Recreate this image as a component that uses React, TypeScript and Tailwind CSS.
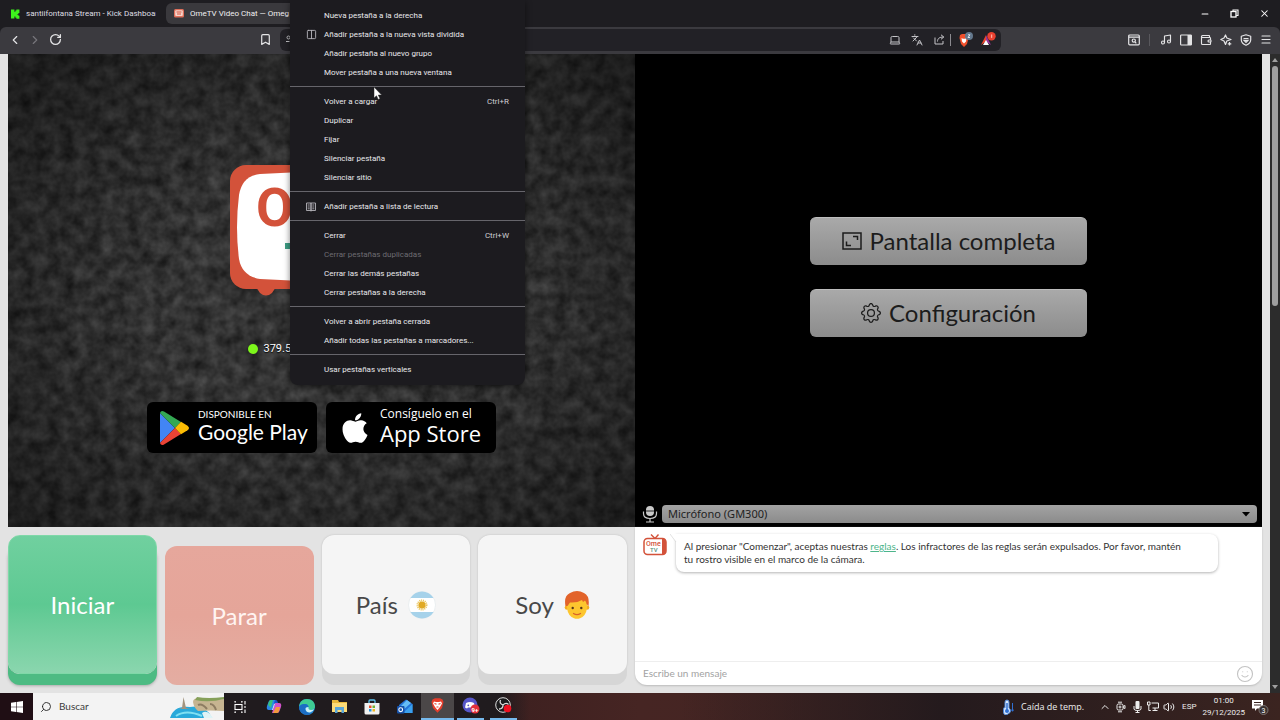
import type { ReactNode } from "react";
import {
  Bookmark,
  ChevronLeft,
  ChevronRight,
  ChevronUp,
  Columns2,
  Languages,
  Laptop,
  Menu,
  Minus,
  Music,
  RotateCw,
  Search,
  Smile,
  Volume2,
  Wallet,
  X,
} from "lucide-react";
import { BsGear } from "react-icons/bs";
import { FaApple } from "react-icons/fa";

interface MenuEntry {
  label: string;
  shortcut?: string;
  icon?: ReactNode;
  disabled?: boolean;
}

const readingListIcon = (
  <svg width="10" height="10" viewBox="0 0 10 10" fill="none" stroke="currentColor" strokeWidth=".9" aria-hidden="true">
    <path d="M.5 1H5v7.500H.5zM5 1h4.500v7.500H5zM5 8.500v1M1.700 3h2M1.700 5h2M1.700 6.800h2M6.300 3h2M6.300 5h2M6.300 6.800h2" />
  </svg>
);

const menuGroups: MenuEntry[][] = [
  [
    { label: "Nueva pestaña a la derecha" },
    { label: "Añadir pestaña a la nueva vista dividida", icon: <Columns2 size={11} strokeWidth={2} /> },
    { label: "Añadir pestaña al nuevo grupo" },
    { label: "Mover pestaña a una nueva ventana" },
  ],
  [
    { label: "Volver a cargar", shortcut: "Ctrl+R" },
    { label: "Duplicar" },
    { label: "Fijar" },
    { label: "Silenciar pestaña" },
    { label: "Silenciar sitio" },
  ],
  [{ label: "Añadir pestaña a lista de lectura", icon: readingListIcon }],
  [
    { label: "Cerrar", shortcut: "Ctrl+W" },
    { label: "Cerrar pestañas duplicadas", disabled: true },
    { label: "Cerrar las demás pestañas" },
    { label: "Cerrar pestañas a la derecha" },
  ],
  [{ label: "Volver a abrir pestaña cerrada" }, { label: "Añadir todas las pestañas a marcadores..." }],
  [{ label: "Usar pestañas verticales" }],
];

function IconButton({ label, className = "", children }: { label: string; className?: string; children: ReactNode }) {
  return (
    <button type="button" aria-label={label} className={`flex shrink-0 items-center justify-center ${className}`}>
      {children}
    </button>
  );
}

function TabStrip() {
  return (
    <div className="flex h-[27px] items-center bg-[#1e1d21] font-[Roboto,sans-serif] text-[8px] text-[#dedde2]">
      <button type="button" className="flex h-[21px] w-[166px] items-center gap-[6px] pl-[10px]">
        <svg width="10" height="10" viewBox="0 0 10 10" fill="#3df21c" aria-hidden="true">
          <path d="M1 .5h3.400v2.200h1V1.600h1V.5h3V4h-1v1h-1v.8h1v1h1v3H6.400v-1h-1V7.500h-1v2H1z" />
        </svg>
        <span className="w-[130px] overflow-hidden whitespace-nowrap text-left">santiifontana Stream - Kick Dashboard</span>
      </button>
      <button type="button" className="flex h-[21px] w-[170px] items-center gap-[6px] rounded-md bg-[#3a393d] pl-2">
        <svg width="10" height="9" viewBox="0 0 10 9" aria-hidden="true">
          <rect width="10" height="8.500" rx="1.500" fill="#e0705b" />
          <rect x="1.200" y="1.300" width="7.600" height="5.600" rx="1" fill="#f6d5cc" />
          <path d="M2.500 3h5M3 5h4" stroke="#d6533a" strokeWidth="1.100" />
        </svg>
        <span className="whitespace-nowrap text-left text-[#f0f0f2]">OmeTV Video Chat — Omeg</span>
      </button>
      <div className="ml-auto flex items-center gap-[20px] pr-[10px] text-white">
        <IconButton label="Minimizar">
          <Minus size={10} strokeWidth={2.500} />
        </IconButton>
        <IconButton label="Restaurar">
          <svg width="9" height="9" viewBox="0 0 9 9" fill="none" stroke="currentColor" aria-hidden="true">
            <rect x="1" y="2.500" width="5" height="5.500" strokeWidth="1.300" />
            <path d="M3 2.500V1h5v5.500H6.200" strokeWidth="1.100" />
          </svg>
        </IconButton>
        <IconButton label="Cerrar ventana">
          <X size={11} strokeWidth={2.200} />
        </IconButton>
      </div>
    </div>
  );
}

function Toolbar() {
  return (
    <div className="flex h-[27px] items-center rounded-t-md bg-[#3b3a3f] px-2 pb-0.5 text-[#e4e4e6]">
      <IconButton label="Atrás" className="w-[14px]">
        <ChevronLeft size={16} />
      </IconButton>
      <IconButton label="Adelante" className="ml-[6px] w-[14px] text-[#77767b]">
        <ChevronRight size={16} />
      </IconButton>
      <IconButton label="Recargar" className="ml-[6px] w-[14px]">
        <RotateCw size={13} strokeWidth={2.400} />
      </IconButton>
      <IconButton label="Marcador" className="ml-[196px] w-[14px]">
        <Bookmark size={13} strokeWidth={2.200} />
      </IconButton>
      <div className="ml-2 flex h-[22px] flex-1 items-center rounded-md bg-[#222126] pr-[5px] text-[#c4c4c8]">
        <svg className="ml-[6px]" width="9" height="9" viewBox="0 0 9 9" fill="none" stroke="currentColor" aria-hidden="true">
          <circle cx="2.500" cy="2.500" r="1.500" />
          <circle cx="6" cy="6.500" r="1.500" />
          <path d="M5 2.500h4M0 6.500h3.500" />
        </svg>
        <IconButton label="Instalar" className="ml-auto w-3">
          <Laptop size={12} />
        </IconButton>
        <IconButton label="Traducir" className="ml-[10px] w-3">
          <Languages size={12} />
        </IconButton>
        <IconButton label="Compartir" className="ml-[10px] w-3">
          <svg width="11" height="11" viewBox="0 0 11 11" fill="none" stroke="currentColor" aria-hidden="true">
            <path d="M1 3.500v6.500h8V7M3.500 7.500c0-3 2-4.500 6-4.500M7 .800l2.800 2.200L7 5.300" />
          </svg>
        </IconButton>
        <span className="ml-[5px] h-3 w-px bg-[#8b8a90]" />
        <IconButton label="Brave Shields" className="ml-[6px] w-4">
          <svg width="16" height="16" viewBox="0 0 16 16" aria-hidden="true">
            <path d="M3 3l2-1h4l2 1 .5 3-1.500 6-3 3-3-3L2.500 6z" fill="#f0502c" />
            <path d="M4.500 6l1.500.8h2L9.500 6 9 9.500l-2 2-2-2z" fill="#fff" />
            <circle cx="12" cy="4" r="4" fill="#63788d" />
            <path d="M11 2.800h2L11 5.500h2" stroke="#e5edf5" strokeWidth=".9" fill="none" />
          </svg>
        </IconButton>
        <IconButton label="Brave Rewards" className="ml-[7px] w-4">
          <svg width="16" height="16" viewBox="0 0 16 16" aria-hidden="true">
            <path d="M6 3L1 13l5-3.500z" fill="#e8452c" />
            <path d="M6 3l5 10-5-3.500z" fill="#9a329a" />
            <path d="M6 8l3 5H3z" fill="#fff" />
            <circle cx="11.500" cy="4.200" r="4.200" fill="#e8402f" />
            <path d="M11.700 2.500v3.400" stroke="#ffc3b8" />
          </svg>
        </IconButton>
      </div>
      <div className="ml-[127px] flex shrink-0 items-center">
        <IconButton label="Buscar pestañas" className="w-3">
          <svg width="12" height="12" viewBox="0 0 12 12" fill="none" stroke="currentColor" strokeWidth="1.200" aria-hidden="true">
            <rect x=".7" y="1" width="10.600" height="9.800" rx="1" />
            <path d="M.7 3.200h10.600M7 8l1.300 1.300" />
            <circle cx="5.800" cy="6.600" r="1.600" />
          </svg>
        </IconButton>
        <span className="ml-[9px] h-3 w-px bg-[#59585d]" />
        <div className="ml-[10px] flex items-center gap-2">
          <IconButton label="Música" className="w-3">
            <Music size={13} strokeWidth={2.300} />
          </IconButton>
          <IconButton label="Barra lateral" className="w-3">
            <svg width="12" height="12" viewBox="0 0 12 12" aria-hidden="true">
              <rect x=".6" y="1" width="10.800" height="10" rx=".8" fill="none" stroke="currentColor" strokeWidth="1.200" />
              <path d="M7.500 1h4v10h-4z" fill="currentColor" />
            </svg>
          </IconButton>
          <IconButton label="Cartera" className="w-3">
            <Wallet size={14} strokeWidth={2.300} />
          </IconButton>
          <IconButton label="Leo" className="w-3">
            <svg width="12" height="12" viewBox="0 0 12 12" fill="none" stroke="currentColor" strokeWidth="1.200" aria-hidden="true">
              <path d="M5.500 1l1.300 3L11 5.500 6.800 7l-1.300 3.500L4 7 .8 5.500 4 4zM9.500 8v3.500M7.800 9.800h3.500" strokeLinejoin="round" />
            </svg>
          </IconButton>
          <IconButton label="VPN" className="w-3">
            <svg width="12" height="12" viewBox="0 0 12 12" fill="none" stroke="currentColor" strokeWidth="1.200" aria-hidden="true">
              <path d="M6 .8l4.700 1.500V6Q10.500 9.500 6 11.300 1.500 9.500 1.300 6V2.300z" strokeLinejoin="round" />
              <path d="M3.500 4.500h5M4 6.300l2 2 2-2z" />
            </svg>
          </IconButton>
          <IconButton label="Menú" className="w-3">
            <Menu size={15} strokeWidth={2.300} />
          </IconButton>
        </div>
      </div>
    </div>
  );
}

function TabMenu() {
  return (
    <div
      role="menu"
      className="absolute left-[290px] top-0 z-20 w-[235px] rounded-b-lg bg-[#1c1b1f] py-1.5 font-[Roboto,sans-serif] text-[8px] text-[#e9e9ec] shadow-[0_2px_6px_rgba(0,0,0,0.5)]"
    >
      {menuGroups.map((group, i) => (
        <div key={i} className={i > 0 ? "mt-1 border-t border-[#66656b] pt-[5px]" : ""}>
          {group.map((entry) => (
            <button
              key={entry.label}
              type="button"
              role="menuitem"
              disabled={entry.disabled}
              className="flex h-[19px] w-full items-center pl-4 pr-4 text-left disabled:text-[#6d6c72]"
            >
              <span className="w-[18px] shrink-0 text-[#b5b4ba]">{entry.icon}</span>
              <span className="whitespace-nowrap">{entry.label}</span>
              {entry.shortcut && <span className="ml-auto text-[#cfced3]">{entry.shortcut}</span>}
            </button>
          ))}
        </div>
      ))}
    </div>
  );
}

function Pointer() {
  return (
    <svg className="absolute left-[373px] top-[86px] z-30" width="10" height="15" viewBox="0 0 10 15" aria-hidden="true">
      <path d="M1 1v11l2.500-2.200 1.700 3.700 1.800-.8-1.700-3.600H8.700z" fill="#fff" stroke="#222" strokeWidth=".5" />
    </svg>
  );
}

function Static() {
  return (
    <svg className="absolute inset-0 h-full w-full" aria-hidden="true">
      <defs>
        <filter id="static" x="0" y="0" width="100%" height="100%" colorInterpolationFilters="sRGB">
          <feTurbulence type="fractalNoise" baseFrequency="0.075" numOctaves="3" seed="8" />
          <feColorMatrix values="0.26 0 0 0 0.07  0.26 0 0 0 0.07  0.26 0 0 0 0.07  0 0 0 0 1" />
        </filter>
        <radialGradient id="vignette" cx="50%" cy="52%" r="70%">
          <stop offset="0.350" stopColor="#000" stopOpacity="0" />
          <stop offset="1" stopColor="#000" stopOpacity="0.450" />
        </radialGradient>
      </defs>
      <rect width="100%" height="100%" filter="url(#static)" />
      <rect width="100%" height="100%" fill="url(#vignette)" />
    </svg>
  );
}

function RemoteVideo() {
  return (
    <section className="relative overflow-hidden bg-[#2b2b2b]">
      <Static />
      <div className="relative flex flex-col items-center pt-[111px]">
        <svg width="184" height="132" viewBox="0 0 184 132" aria-hidden="true">
          <rect width="184" height="124" rx="16" fill="#d3523a" />
          <path d="M26 122l4 6q6 5 12 0l4-6z" fill="#d3523a" />
          <path d="M30 9Q92 5 154 9q19 2 21 21 3 32 0 64-3 18-21 20-62 4-124 0-18-3-21-20-4-32 0-64 3-19 21-21z" fill="#fff" />
          <text x="26" y="61" fill="#d3523a" className="font-[Roboto,sans-serif] text-[54px] font-bold">
            O
          </text>
          <rect x="55" y="78" width="30" height="6" fill="#3d9d84" />
        </svg>
        <div className="mt-11 flex h-4 w-[148px] items-center gap-[6px] font-[Roboto,sans-serif] text-[11px] text-white [text-shadow:0_1px_1px_#000]">
          <span className="size-[10px] rounded-full bg-[#7df61b]" />
          <span>379.5</span>
        </div>
        <div className="mt-[45px] flex gap-[9px] text-white">
          <a href="#google-play" className="flex h-[51px] w-[170px] items-center gap-[9px] rounded-md bg-black pl-[13px]">
            <svg width="29" height="34" viewBox="0 0 29 34" aria-hidden="true">
              <path d="M0 2v30L15 17z" fill="#4285f4" />
              <path d="M0 2q1-3 4-1.500L21 11l-6 6z" fill="#34a853" />
              <path d="M0 32q1 3 4 1.500L21 23l-6-6z" fill="#ea4335" />
              <path d="M21 10.700l6.500 4q3 2.300 0 4.600L21 23.300 15 17z" fill="#fbbc04" />
            </svg>
            <span className="flex flex-col pb-1">
              <span className="text-[10px] leading-3">DISPONIBLE EN</span>
              <span className="whitespace-nowrap text-[21px] leading-6">Google Play</span>
            </span>
          </a>
          <a
            href="#app-store"
            className="flex h-[51px] w-[170px] items-center gap-2 rounded-md bg-black pl-[14px] font-['Open_Sans',sans-serif]"
          >
            <FaApple size={34} className="-ml-0.5 shrink-0" />
            <span className="flex flex-col pb-1">
              <span className="whitespace-nowrap text-[12px] leading-[14px]">Consíguelo en el</span>
              <span className="whitespace-nowrap text-[22px] leading-6">App Store</span>
            </span>
          </a>
        </div>
      </div>
    </section>
  );
}

const videoButton =
  "flex h-12 w-[277px] items-center justify-center gap-2 rounded-md border-t border-[#bdbdbd] bg-linear-to-b from-[#a9a9a9] to-[#8c8c8c] text-2xl text-[#1c1c1c]";

function LocalVideo() {
  return (
    <section className="flex flex-col bg-black">
      <div className="flex flex-1 flex-col items-center justify-center gap-6 pb-1.5">
        <button type="button" className={videoButton}>
          <svg width="20" height="18" viewBox="0 0 20 18" fill="none" stroke="currentColor" strokeWidth="1.500" aria-hidden="true">
            <rect x="1" y="1" width="18" height="16" />
            <path d="M11 4.500h4.500V8M4.500 9.500v4H9" />
          </svg>
          Pantalla completa
        </button>
        <button type="button" className={videoButton}>
          <BsGear size={20} />
          Configuración
        </button>
      </div>
      <div className="flex items-center gap-1 pb-1 pl-[7px] pr-[5px]">
        <label htmlFor="microphone" aria-label="Micrófono">
          <svg width="16" height="18" viewBox="0 0 16 18" fill="none" stroke="#c9c9c9" strokeWidth="1.200" aria-hidden="true">
            <rect x="4" y="1" width="8" height="10" rx="4" fill="#c9c9c9" stroke="none" />
            <path d="M4 6h8" stroke="#444" />
            <path d="M1.500 6.500v2q0 5 6.500 5t6.500-5v-2M8 13.500v3M4 17h8" />
          </svg>
        </label>
        <div className="relative flex-1">
          <select
            id="microphone"
            className="block h-[18px] w-full appearance-none rounded-sm bg-linear-to-b from-[#a3a3a3] to-[#8b8b8b] pl-[6px] font-['Noto_Sans',sans-serif] text-[11px] leading-[18px] text-[#222]"
          >
            <option>Micrófono (GM300)</option>
          </select>
          <svg className="pointer-events-none absolute right-[7px] top-[7px]" width="8" height="5" viewBox="0 0 8 5" aria-hidden="true">
            <path d="M0 0h8L4 4.500z" fill="#000" />
          </svg>
        </div>
      </div>
    </section>
  );
}

function Flag() {
  return (
    <svg width="28" height="28" viewBox="0 0 28 28" aria-hidden="true">
      <circle cx="14" cy="14" r="13.500" fill="#fff" stroke="#dfe6ea" strokeWidth=".6" />
      <path d="M2.400 7A13.500 13.500 0 0 1 25.600 7z" fill="#a6d2ea" />
      <path d="M2.400 21A13.500 13.500 0 0 0 25.600 21z" fill="#a6d2ea" />
      <circle cx="14" cy="14" r="4.500" fill="none" stroke="#ecc65c" strokeWidth="2" strokeDasharray="1 .8" />
      <circle cx="14" cy="14" r="3.500" fill="#e0a924" />
    </svg>
  );
}

function Boy() {
  return (
    <svg width="26" height="28" viewBox="0 0 26 28" aria-hidden="true">
      <circle cx="3" cy="16.500" r="2.300" fill="#f5ad1f" />
      <circle cx="23" cy="16.500" r="2.300" fill="#f5ad1f" />
      <path d="M3 11q0-7 10-7t10 7v6q-1 8-7 10.300-3 1-6 0Q4 25 3 17z" fill="#fdc62f" />
      <path d="M1.500 15Q-.5 5 6 2q7-4 14 0 6 3 4.500 13l-2-2q0-2-1.500-3.500L19 11l-1-2q-5 3-12 2.500L3.500 15z" fill="#e2632a" />
      <circle cx="8.700" cy="17" r="1.200" fill="#55371b" />
      <circle cx="17.300" cy="17" r="1.200" fill="#55371b" />
      <path d="M9.500 22.500q3.500 2.200 7 0" stroke="#d9622b" strokeWidth="1.300" fill="none" strokeLinecap="round" />
    </svg>
  );
}

const raisedWhite =
  "flex h-[139px] items-center justify-center gap-[10px] rounded-xl bg-[#f5f5f5] text-[#484848] shadow-[0_11px_0_#d6d6d6,0_0_2px_#bbb]";

function Controls() {
  return (
    <div className="grid h-[158px] grid-cols-4 gap-2 pr-2 pt-2 text-2xl">
      <button
        type="button"
        className="h-[139px] rounded-xl border border-[#7fd8a8] bg-linear-to-b from-[#70d09f] via-[#5dc992] to-[#8ad6ae] text-white shadow-[0_11px_0_#4dbb83,0_12px_3px_#aaa]"
      >
        Iniciar
      </button>
      <button type="button" className="mt-[11px] h-[139px] rounded-xl bg-linear-to-b from-[#e6a79c] via-[#e5a599] to-[#e4ada2] text-[#fff4f1]">
        Parar
      </button>
      <button type="button" className={raisedWhite}>
        País <Flag />
      </button>
      <button type="button" className={raisedWhite}>
        Soy <Boy />
      </button>
    </div>
  );
}

function Chat() {
  return (
    <section className="flex h-[158px] flex-col rounded-b-xl bg-white shadow-[0_1px_2px_#bbb]">
      <div className="flex flex-1 items-start gap-[9px] pl-2 pt-[7px]">
        <svg width="24" height="22" viewBox="0 0 24 22" aria-hidden="true">
          <path d="M8 .5l4 4 3.500-4" fill="none" stroke="#d3523a" strokeWidth="1.400" />
          <rect x="1" y="4.500" width="22" height="16" rx="3.500" fill="#fff" stroke="#d3523a" strokeWidth="1.500" />
          <path d="M19 4.500h1q3 0 3 3.500v9q0 3.500-3 3.500h-1z" fill="#d3523a" />
          <text x="3" y="12" fill="#d3523a" className="font-[Roboto,sans-serif] text-[7px] font-medium">
            Ome
          </text>
          <text x="7" y="18" fill="#5b8f7d" className="font-[Roboto,sans-serif] text-[6px] font-medium">
            TV
          </text>
        </svg>
        <div className="relative mr-11 flex-1 rounded-lg rounded-tl-none bg-white py-[6px] pl-2 pr-7 text-[10px] leading-[13px] text-[#333] shadow-[0_1px_3px_rgba(0,0,0,0.3)]">
          <svg className="absolute -left-[6px] top-0" width="7" height="9" viewBox="0 0 7 9" aria-hidden="true">
            <path d="M0 0h7v9z" fill="#fff" />
            <path d="M0 0l6 8" stroke="#d5d5d5" strokeWidth=".7" />
          </svg>
          <p>
            Al presionar "Comenzar", aceptas nuestras{" "}
            <a href="#reglas" className="text-[#4db58b] underline">
              reglas
            </a>
            . Los infractores de las reglas serán expulsados. Por favor, mantén tu rostro visible en el marco de la cámara.
          </p>
        </div>
      </div>
      <div className="flex h-6 items-center border-t border-[#eeeeee] px-2">
        <input
          type="text"
          aria-label="Mensaje"
          placeholder="Escribe un mensaje"
          className="flex-1 bg-transparent text-[10px] outline-none placeholder:text-[#a2a2a2]"
        />
        <IconButton label="Emojis" className="text-[#c3c3c3]">
          <Smile size={18} strokeWidth={1.500} />
        </IconButton>
      </div>
    </section>
  );
}

function Scrollbar() {
  return (
    <div className="flex w-[10px] shrink-0 flex-col items-center bg-[#2c2c2c] py-1" aria-hidden="true">
      <svg width="6" height="4" viewBox="0 0 6 4">
        <path d="M0 4l3-4 3 4z" fill="#9f9f9f" />
      </svg>
      <div className="mt-1 h-[240px] w-[6px] rounded-full bg-[#9f9f9f]" />
      <svg className="mt-auto" width="6" height="4" viewBox="0 0 6 4">
        <path d="M0 0l3 4 3-4z" fill="#9f9f9f" />
      </svg>
    </div>
  );
}

function SearchArt() {
  return (
    <svg width="56" height="22" viewBox="0 0 56 22" aria-hidden="true">
      <path d="M2 22Q6 9 22 11q16-3 22 11z" fill="#29a9da" />
      <path d="M8 20q10-7 26 0" fill="none" stroke="#7fe0f2" strokeWidth="2" />
      <path d="M14 12l1.500-11L18 12l4 1H11z" fill="#a3947f" />
      <path d="M25 6q0-4 6-4 13 2 25 1v12q-14-1-26 0-4-3-5-9z" fill="#c6b491" />
      <path d="M27 4q14 3 29-1V1Q40 3 29 1z" fill="#86a05a" />
      <path d="M30 9q4-2 9 4M42 8q4 0 6 6" stroke="#8d7c62" strokeWidth="2" fill="none" />
      <path d="M34 17q4-3 8 1l3 4h-9z" fill="#def3f6" />
    </svg>
  );
}

function TaskbarApps() {
  return (
    <div className="flex h-full items-stretch text-white">
      <IconButton label="Vista de tareas" className="w-8">
        <svg width="12" height="12" viewBox="0 0 12 12" fill="none" stroke="currentColor" strokeWidth="1.100" aria-hidden="true">
          <rect x="1" y="3.500" width="7" height="5" />
          <path d="M.5 1h1.500M7 1h1.500M.5 11h1.500M7 11h1.500M1 0v1.500M8 0v1.500M1 10.500V12M8 10.500V12M11 0v3.500M11 5v2M11 8.500V12" />
        </svg>
      </IconButton>
      <IconButton label="Copilot" className="ml-px w-[33px]">
        <svg width="16" height="15" viewBox="0 0 16 15" aria-hidden="true">
          <path d="M5 1h5l-3 10H3Q0 11 1 7l1.500-4Q3 1 5 1z" fill="#2a87e8" />
          <path d="M2 6l1-3.500Q3.500 1 5 1h2L5 9z" fill="#38c27c" />
          <path d="M11 14H6L9 4h4q3 0 2 4l-1.500 4q-.5 2-2.500 2z" fill="#d052c9" />
          <path d="M14 8l-1 4q-.5 2-2 2H7l3-6z" fill="#f39a3c" />
          <path d="M9 1h1q1.500 0 2 3H8z" fill="#1953c8" />
          <path d="M6.500 11l2-6" stroke="#fff" strokeWidth=".8" />
        </svg>
      </IconButton>
      <IconButton label="Edge" className="w-[33px]">
        <svg width="16" height="16" viewBox="0 0 16 16" aria-hidden="true">
          <circle cx="8" cy="8" r="8" fill="#1f86d6" />
          <path d="M0 7.500Q1 0 8 0t8 7q0 4-4 4-3 0-2.500-2 .5-4-4-4Q2 5 0 7.500z" fill="#3ecb93" />
          <path d="M0 8q2-3.500 6-3 3 0 3.500 3Q6 7 6 10q1 4 6 4.500Q9 17 5 15 0 13 0 8z" fill="#1c6dc4" />
          <path d="M6.500 10q0-2 3-2-.5 3 2.500 3 2 0 3-1-1 3-4 3.500-4 0-4.500-3.500z" fill="#cdeff9" />
        </svg>
      </IconButton>
      <IconButton label="Explorador de archivos" className="w-8">
        <svg width="15" height="13" viewBox="0 0 15 13" aria-hidden="true">
          <path d="M0 0h6l1 2h8v10H0z" fill="#e9b93c" />
          <path d="M0 3h15v9H0z" fill="#fbdb78" />
          <path d="M3 7h9v6h-2.500v-3h-4v3H3z" fill="#5aa6d8" />
        </svg>
      </IconButton>
      <IconButton label="Microsoft Store" className="w-[33px]">
        <svg width="16" height="16" viewBox="0 0 16 16" aria-hidden="true">
          <path d="M5 4V2q0-1 1-1h4q1 0 1 1v2" fill="none" stroke="#5ec4ef" strokeWidth="1.300" />
          <path d="M.5 4h15v10q0 1.500-1.500 1.500H2Q.5 15.500.5 14z" fill="#f1f1f1" />
          <path d="M5 6.500h2.500V9H5z" fill="#e8512d" />
          <path d="M8.500 6.500H11V9H8.500z" fill="#6fb431" />
          <path d="M5 10h2.500v2.500H5z" fill="#2793dc" />
          <path d="M8.500 10H11v2.500H8.500z" fill="#f0b61d" />
        </svg>
      </IconButton>
      <IconButton label="Outlook" className="w-[33px]">
        <svg width="16" height="15" viewBox="0 0 16 15" aria-hidden="true">
          <path d="M2 6l7-5.500L15.500 5v9H2z" fill="#2374d8" />
          <path d="M4 7l6-6 4 3-8 7z" fill="#66bdf5" />
          <path d="M15.500 5v9H6z" fill="#3aa0ee" />
          <rect x="0" y="7" width="7.500" height="7.500" rx="1" fill="#1450a8" />
          <circle cx="3.700" cy="10.700" r="1.900" fill="none" stroke="#fff" strokeWidth="1.100" />
        </svg>
      </IconButton>
      <IconButton label="Brave" className="w-[33px] border-b-2 border-[#76b9ed] bg-[#4b4748]">
        <svg width="13" height="15" viewBox="0 0 13 15" aria-hidden="true">
          <path d="M1.500 1.500L4 .3h5l2.500 1.200 1 2.500-1.500 6-4.500 4.700L2 10 .5 4z" fill="#e63e2c" />
          <path d="M3 3.500l2 .5h3l2-.5 1 2L9 9l-2.500 3L4 9 2 5.500z" fill="#fff" />
          <path d="M3.500 5.500l2 .8M9.500 5.500l-2 .8M5.500 9h2" stroke="#e63e2c" strokeWidth="1.100" />
        </svg>
      </IconButton>
      <IconButton label="Discord" className="mx-[3px] w-[27px] border-b-2 border-[#76b9ed]">
        <svg width="18" height="17" viewBox="0 0 18 17" aria-hidden="true">
          <circle cx="8" cy="8" r="7.500" fill="#5656c9" />
          <path d="M4 6q4-2 8 0l1 4.500-2 1-1-1H6l-1 1-2-1z" fill="#fff" />
          <circle cx="6.300" cy="8.300" r=".9" fill="#5656c9" />
          <circle cx="13" cy="12" r="4.500" fill="#e3303c" />
          <text x="9.500" y="14.500" fill="#fff" className="font-[Roboto,sans-serif] text-[6px] font-bold">
            9+
          </text>
        </svg>
      </IconButton>
      <IconButton label="OBS" className="mx-[3px] w-[27px] border-b-2 border-[#76b9ed]">
        <svg width="17" height="17" viewBox="0 0 17 17" aria-hidden="true">
          <circle cx="8" cy="8" r="7.300" fill="#1c1c1e" stroke="#dcdcdc" />
          <path d="M8 8Q4 6.500 5.500 3M8 8q3-3 5.500-.5M8 8q0 4-4 4" fill="none" stroke="#dcdcdc" strokeWidth="1.300" />
          <circle cx="12.500" cy="11.500" r="3.800" fill="#ee1020" />
        </svg>
      </IconButton>
    </div>
  );
}

function Tray() {
  return (
    <div className="ml-auto flex items-center pr-[11px] font-[Roboto,sans-serif] text-[8px] text-[#ededed]">
      <button type="button" className="flex items-center gap-[7px] text-[9px]">
        <svg width="12" height="16" viewBox="0 0 12 16" aria-hidden="true">
          <path d="M3 3q0-2 2-2t2 2v6q1.500 1 1.500 3T5 15.500 1.500 12 3 9z" fill="#d9e8fa" stroke="#4e86d6" />
          <path d="M5 4v7" stroke="#2f6fd2" strokeWidth="1.500" />
          <circle cx="5" cy="12" r="2" fill="#2f6fd2" />
          <path d="M10.500 4v8M9.200 10.500l1.300 1.800 1.300-1.800" stroke="#2f6fd2" fill="none" />
        </svg>
        <span className="w-[66px] whitespace-nowrap text-left font-['Open_Sans',sans-serif]">Caída de temp.</span>
      </button>
      <div className="ml-3 flex items-center gap-1">
        <IconButton label="Iconos ocultos" className="w-3">
          <ChevronUp size={12} />
        </IconButton>
        <IconButton label="Cámara" className="w-3">
          <svg width="10" height="12" viewBox="0 0 10 12" fill="none" stroke="currentColor" aria-hidden="true">
            <rect x="1" y="3" width="6" height="6" rx="1.500" />
            <circle cx="4" cy="6" r="1" />
            <path d="M7 5.500l2-1v3l-2-1M2 1.200h4M2 10.800h4" />
          </svg>
        </IconButton>
        <IconButton label="Micrófono en uso" className="w-3">
          <svg width="9" height="12" viewBox="0 0 9 12" aria-hidden="true">
            <rect x="2.500" y="0" width="4" height="8" rx="1" fill="currentColor" />
            <path d="M1 5v3q0 1.500 3.500 1.500T8 8V5M4.500 9v2.500M2.500 11.500h4" stroke="currentColor" fill="none" />
          </svg>
        </IconButton>
        <IconButton label="Red" className="w-3">
          <svg width="12" height="11" viewBox="0 0 12 11" fill="none" stroke="currentColor" aria-hidden="true">
            <path d="M4.500 2h7v5h-6M8 7v2.500M5.500 9.500h5M.5 1v3h2.500V1zM1.800 4v5.500h2" />
          </svg>
        </IconButton>
        <IconButton label="Volumen" className="w-3">
          <Volume2 size={12} />
        </IconButton>
      </div>
      <button type="button" className="ml-[7px]">
        ESP
      </button>
      <button type="button" className="ml-[6px] flex flex-col items-center leading-3">
        <span>01:00</span>
        <span>29/12/2025</span>
      </button>
      <IconButton label="Notificaciones" className="ml-[7px]">
        <svg width="17" height="16" viewBox="0 0 17 16" aria-hidden="true">
          <path d="M0 1h11v8.500H5L3 12V9.500H0z" fill="#fff" />
          <path d="M2 3.500h7M2 6h7" stroke="#3a2522" />
          <circle cx="11.500" cy="11" r="4.500" fill="#38302f" stroke="#8f8684" strokeWidth=".8" />
          <text x="9.500" y="13.700" fill="#fff" className="font-[Roboto,sans-serif] text-[7px]">
            3
          </text>
        </svg>
      </IconButton>
    </div>
  );
}

function Taskbar() {
  return (
    <footer className="flex h-[27px] items-stretch bg-linear-to-r from-[#200f14] from-0% via-[#462523] via-50% to-[#3b2420]">
      <IconButton label="Inicio" className="w-[33px] bg-[#1f0e14]">
        <svg width="12" height="12" viewBox="0 0 12 12" fill="#fff" aria-hidden="true">
          <path d="M0 1.700l5-.7v4.700H0zM5.600.9L12 0v5.700H5.600zM0 6.300h5V11l-5-.7zM5.600 6.300H12V12l-6.400-.9z" />
        </svg>
      </IconButton>
      <div className="flex w-[191px] items-center bg-[#f3f3f3] pl-[7px]">
        <label htmlFor="search" aria-label="Buscar">
          <Search size={12} strokeWidth={1.800} className="-scale-x-100 text-[#222]" />
        </label>
        <input
          id="search"
          type="text"
          placeholder="Buscar"
          className="ml-[7px] w-0 flex-1 bg-transparent text-[10px] outline-none placeholder:text-[#3c3c3c]"
        />
        <SearchArt />
      </div>
      <div className="w-[306px] bg-linear-to-r from-[#201b1e] from-90% to-transparent">
        <TaskbarApps />
      </div>
      <div className="flex flex-1 items-stretch bg-linear-to-r from-transparent from-20% via-[#241a1d] via-55% to-[#3b2420]">
        <Tray />
      </div>
    </footer>
  );
}

export default function App() {
  return (
    <div className="relative flex min-h-screen flex-col overflow-hidden bg-[#1e1d21] font-[Lato,'Noto_Sans',sans-serif]">
      <TabStrip />
      <Toolbar />
      <div className="flex flex-1">
        <main className="flex flex-1 flex-col bg-[#e3e3e3] px-2 pb-2">
          <div className="grid flex-1 grid-cols-2">
            <RemoteVideo />
            <LocalVideo />
          </div>
          <div className="grid grid-cols-2">
            <Controls />
            <Chat />
          </div>
        </main>
        <Scrollbar />
      </div>
      <Taskbar />
      <TabMenu />
      <Pointer />
    </div>
  );
}
